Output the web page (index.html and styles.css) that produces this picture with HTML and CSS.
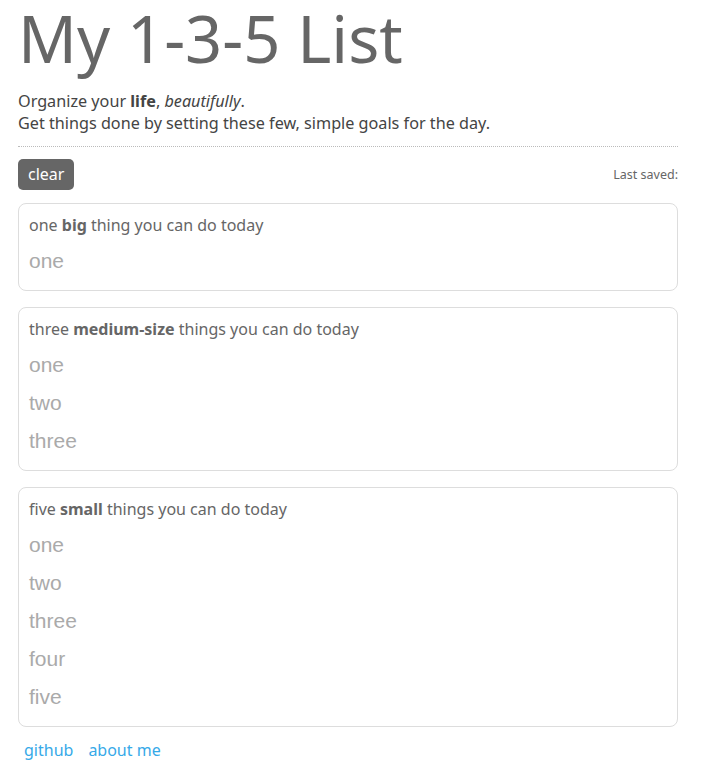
FILE: index.html
```html
<!DOCTYPE html>
<html>
<head>
<meta charset="utf-8">
<link rel="stylesheet" href="styles.css">
</head>
<body>
<div class="page">
  <h1 class="title">My 1-3-5 List</h1>
  <p class="intro">Organize your <b>life</b>, <i>beautifully</i>.<br>Get things done by setting these few, simple goals for the day.</p>
  <hr class="rule">
  <div class="toolbar">
    <button class="clear">clear</button>
    <span class="saved">Last saved:</span>
  </div>
  <section class="card">
    <div class="card-head">one <b>big</b> thing you can do today</div>
    <div class="item">one</div>
  </section>
  <section class="card">
    <div class="card-head">three <b>medium-size</b> things you can do today</div>
    <div class="item">one</div>
    <div class="item">two</div>
    <div class="item">three</div>
  </section>
  <section class="card">
    <div class="card-head">five <b>small</b> things you can do today</div>
    <div class="item">one</div>
    <div class="item">two</div>
    <div class="item">three</div>
    <div class="item">four</div>
    <div class="item">five</div>
  </section>
  <nav class="links"><a href="#">github</a><a href="#">about me</a></nav>
</div>
</body>
</html>
```
FILE: styles.css
```css
html, body { margin: 0; padding: 0; background: #fff; }
body { font-family: "Noto Sans", "Open Sans", sans-serif; color: #444; }
.page { width: 660px; padding: 0 18px; }
.title { margin: 0; padding-bottom: 4px; font-size: 65px; font-weight: 400; line-height: 76px; color: #666; }
.intro { margin: 10px 0 0; font-size: 16.2px; line-height: 22px; color: #444; }
.intro b { font-weight: 700; }
.rule { margin: 12px 0 0; border: 0; border-top: 1px dotted #bbb; height: 0; }
.toolbar { display: flex; justify-content: space-between; align-items: center; margin-top: 12px; }
.clear { font-family: "Noto Sans", sans-serif; font-size: 16px; color: #fff; background: #666; border: 0; border-radius: 5px; padding: 0 10px; height: 31px; line-height: 31px; }
.saved { font-size: 12.5px; color: #666; }
.card { border: 1px solid #ddd; border-radius: 8px; padding: 10px 10px 10px; margin-top: 13px; }
.card + .card { margin-top: 16px; }
.card-head { font-size: 16px; line-height: 22px; color: #666; margin-bottom: 6px; }
.card-head b { color: #666; }
.item { font-family: "Liberation Sans", Arial, sans-serif; font-size: 21px; line-height: 38px; height: 38px; color: #aaa; }
.links { margin-top: 9px; }
.links a { font-size: 16px; color: #36a9e8; text-decoration: none; padding: 0 6px; line-height: 28px; margin-right: 3px; }
```
